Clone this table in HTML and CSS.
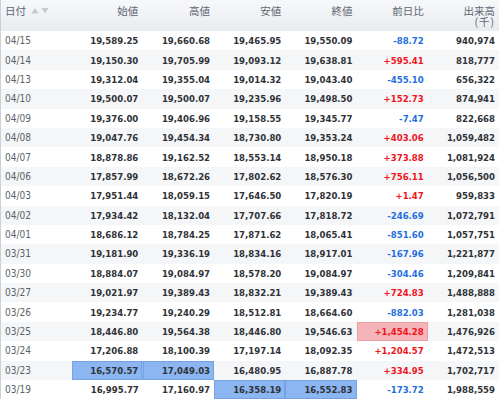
FILE: index.html
```html
<!DOCTYPE html>
<html lang="ja">
<head>
<meta charset="utf-8">
<link rel="stylesheet" href="styles.css">
</head>
<body>
<table class="quotes">
<colgroup>
<col class="c-date"><col class="c-num"><col class="c-num"><col class="c-num"><col class="c-num"><col class="c-num"><col class="c-num">
</colgroup>
<thead>
<tr>
<th class="h-date">日付<span class="sort"><svg width="18" height="7" viewBox="0 0 18 7"><path d="M0.5 6.5 L4 1 L7.5 6.5 Z" fill="#c5c9d0"/><path d="M10.5 1 L17.5 1 L14 6.5 Z" fill="#c5c9d0"/></svg></span></th>
<th>始値</th><th>高値</th><th>安値</th><th>終値</th><th>前日比</th><th><span class="hl">出来高</span><span class="hl unit">(千)</span></th>
</tr>
</thead>
<tbody>
<tr><td>04/15</td><td>19,589.25</td><td>19,660.68</td><td>19,465.95</td><td>19,550.09</td><td class="dn">-88.72</td><td>940,974</td></tr>
<tr><td>04/14</td><td>19,150.30</td><td>19,705.99</td><td>19,093.12</td><td>19,638.81</td><td class="up">+595.41</td><td>818,777</td></tr>
<tr><td>04/13</td><td>19,312.04</td><td>19,355.04</td><td>19,014.32</td><td>19,043.40</td><td class="dn">-455.10</td><td>656,322</td></tr>
<tr><td>04/10</td><td>19,500.07</td><td>19,500.07</td><td>19,235.96</td><td>19,498.50</td><td class="up">+152.73</td><td>874,941</td></tr>
<tr><td>04/09</td><td>19,376.00</td><td>19,406.96</td><td>19,158.55</td><td>19,345.77</td><td class="dn">-7.47</td><td>822,668</td></tr>
<tr><td>04/08</td><td>19,047.76</td><td>19,454.34</td><td>18,730.80</td><td>19,353.24</td><td class="up">+403.06</td><td>1,059,482</td></tr>
<tr><td>04/07</td><td>18,878.86</td><td>19,162.52</td><td>18,553.14</td><td>18,950.18</td><td class="up">+373.88</td><td>1,081,924</td></tr>
<tr><td>04/06</td><td>17,857.99</td><td>18,672.26</td><td>17,802.62</td><td>18,576.30</td><td class="up">+756.11</td><td>1,056,500</td></tr>
<tr><td>04/03</td><td>17,951.44</td><td>18,059.15</td><td>17,646.50</td><td>17,820.19</td><td class="up">+1.47</td><td>959,833</td></tr>
<tr><td>04/02</td><td>17,934.42</td><td>18,132.04</td><td>17,707.66</td><td>17,818.72</td><td class="dn">-246.69</td><td>1,072,791</td></tr>
<tr><td>04/01</td><td>18,686.12</td><td>18,784.25</td><td>17,871.62</td><td>18,065.41</td><td class="dn">-851.60</td><td>1,057,751</td></tr>
<tr><td>03/31</td><td>19,181.90</td><td>19,336.19</td><td>18,834.16</td><td>18,917.01</td><td class="dn">-167.96</td><td>1,221,877</td></tr>
<tr><td>03/30</td><td>18,884.07</td><td>19,084.97</td><td>18,578.20</td><td>19,084.97</td><td class="dn">-304.46</td><td>1,209,841</td></tr>
<tr><td>03/27</td><td>19,021.97</td><td>19,389.43</td><td>18,832.21</td><td>19,389.43</td><td class="up">+724.83</td><td>1,488,888</td></tr>
<tr><td>03/26</td><td>19,234.77</td><td>19,240.29</td><td>18,512.81</td><td>18,664.60</td><td class="dn">-882.03</td><td>1,281,038</td></tr>
<tr><td>03/25</td><td>18,446.80</td><td>19,564.38</td><td>18,446.80</td><td>19,546.63</td><td class="up hl-red">+1,454.28</td><td>1,476,926</td></tr>
<tr><td>03/24</td><td>17,206.88</td><td>18,100.39</td><td>17,197.14</td><td>18,092.35</td><td class="up">+1,204.57</td><td>1,472,513</td></tr>
<tr><td>03/23</td><td class="hl-blue">16,570.57</td><td class="hl-blue">17,049.03</td><td>16,480.95</td><td>16,887.78</td><td class="up">+334.95</td><td>1,702,717</td></tr>
<tr><td>03/19</td><td>16,995.77</td><td>17,160.97</td><td class="hl-blue">16,358.19</td><td class="hl-blue">16,552.83</td><td class="dn">-173.72</td><td>1,988,559</td></tr>
</tbody>
</table>
</body>
</html>
```
FILE: styles.css
```css
html, body {
  margin: 0;
  padding: 0;
  background: #ffffff;
}

.quotes {
  width: 499px;
  table-layout: fixed;
  border-collapse: collapse;
  border-left: 1px solid #c9d1dc;
  font-family: "DejaVu Sans", "Liberation Sans", sans-serif;
  font-stretch: condensed;
}

.c-date { width: 71px; }
.c-num { width: 71.17px; }

.quotes thead tr {
  height: 31px;
  background: linear-gradient(#f7f8fa, #e8ebef);
}

.quotes th {
  vertical-align: top;
  text-align: right;
  padding: 5px 4px 0 0;
  font-family: "Noto Sans CJK JP", sans-serif;
  font-weight: normal;
  font-size: 10.5px;
  line-height: 11px;
  color: #5f6670;
  white-space: nowrap;
}

.quotes th .hl {
  display: block;
  line-height: 11px;
}

.quotes th .unit {
  letter-spacing: 1px;
}

.quotes th.h-date {
  text-align: left;
  padding-left: 4px;
}

.sort {
  display: inline-block;
  margin-left: 5px;
  vertical-align: 1px;
}

.sort svg { display: block; }

.quotes tbody tr { height: 19.4px; }
.quotes tbody tr:nth-child(even) { background: #f5f6f8; }

.quotes td {
  padding: 0 4px 0 0;
  text-align: right;
  font-size: 9.5px;
  font-weight: bold;
  color: #2f3237;
  white-space: nowrap;
  vertical-align: middle;
}

.quotes td:first-child {
  text-align: left;
  padding-left: 4px;
  font-weight: normal;
  font-size: 10px;
  color: #5a5f68;
}

.quotes td.up { color: #f0141e; }
.quotes td.dn { color: #1f6fe0; }

.quotes td.hl-blue {
  background: #8cb6f2;
  box-shadow: inset 0 0 0 1px #77a2e2;
}

.quotes td.hl-red {
  background: #f5b4b8;
  box-shadow: inset 0 0 0 1px #eba0a5;
}
```
